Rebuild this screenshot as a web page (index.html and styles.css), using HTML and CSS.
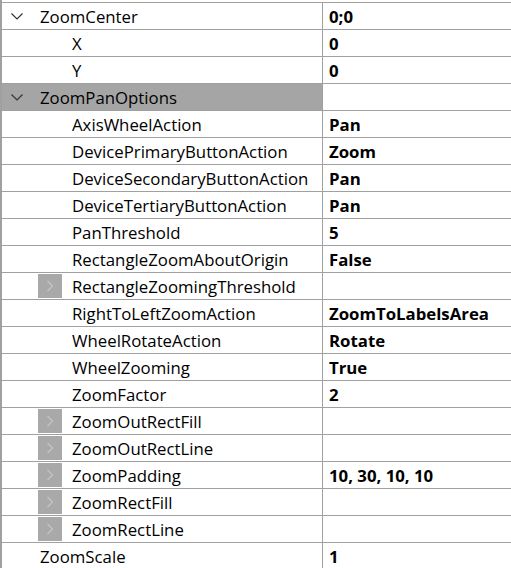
FILE: index.html
```html
<!DOCTYPE html>
<html>
<head>
<meta charset="utf-8">
<link rel="stylesheet" href="styles.css">
</head>
<body>
<div class="grid">
  <div class="row"><div class="name lvl0"><span class="chev"><svg width="12" height="7" viewBox="0 0 12 7"><path d="M0.5 0.5 L6 6 L11.5 0.5" fill="none" stroke="#333" stroke-width="1.2"/></svg></span>ZoomCenter</div><div class="val">0;0</div></div>
  <div class="row"><div class="name lvl1">X</div><div class="val">0</div></div>
  <div class="row"><div class="name lvl1">Y</div><div class="val">0</div></div>
  <div class="row sel"><div class="name lvl0"><span class="chev"><svg width="12" height="7" viewBox="0 0 12 7"><path d="M0.5 0.5 L6 6 L11.5 0.5" fill="none" stroke="#333" stroke-width="1.2"/></svg></span>ZoomPanOptions</div><div class="val"></div></div>
  <div class="row"><div class="name lvl1">AxisWheelAction</div><div class="val">Pan</div></div>
  <div class="row"><div class="name lvl1">DevicePrimaryButtonAction</div><div class="val">Zoom</div></div>
  <div class="row"><div class="name lvl1">DeviceSecondaryButtonAction</div><div class="val">Pan</div></div>
  <div class="row"><div class="name lvl1">DeviceTertiaryButtonAction</div><div class="val">Pan</div></div>
  <div class="row"><div class="name lvl1">PanThreshold</div><div class="val">5</div></div>
  <div class="row"><div class="name lvl1">RectangleZoomAboutOrigin</div><div class="val">False</div></div>
  <div class="row"><div class="name lvl1 exp"><span class="box"><svg width="8" height="12" viewBox="0 0 8 12"><path d="M1.5 1 L6.5 6 L1.5 11" fill="none" stroke="#c4c4c4" stroke-width="1.3"/></svg></span>RectangleZoomingThreshold</div><div class="val"></div></div>
  <div class="row"><div class="name lvl1">RightToLeftZoomAction</div><div class="val">ZoomToLabelsArea</div></div>
  <div class="row"><div class="name lvl1">WheelRotateAction</div><div class="val">Rotate</div></div>
  <div class="row"><div class="name lvl1">WheelZooming</div><div class="val">True</div></div>
  <div class="row"><div class="name lvl1">ZoomFactor</div><div class="val">2</div></div>
  <div class="row"><div class="name lvl1 exp"><span class="box"><svg width="8" height="12" viewBox="0 0 8 12"><path d="M1.5 1 L6.5 6 L1.5 11" fill="none" stroke="#c4c4c4" stroke-width="1.3"/></svg></span>ZoomOutRectFill</div><div class="val"></div></div>
  <div class="row"><div class="name lvl1 exp"><span class="box"><svg width="8" height="12" viewBox="0 0 8 12"><path d="M1.5 1 L6.5 6 L1.5 11" fill="none" stroke="#c4c4c4" stroke-width="1.3"/></svg></span>ZoomOutRectLine</div><div class="val"></div></div>
  <div class="row"><div class="name lvl1 exp"><span class="box"><svg width="8" height="12" viewBox="0 0 8 12"><path d="M1.5 1 L6.5 6 L1.5 11" fill="none" stroke="#c4c4c4" stroke-width="1.3"/></svg></span>ZoomPadding</div><div class="val">10, 30, 10, 10</div></div>
  <div class="row"><div class="name lvl1 exp"><span class="box"><svg width="8" height="12" viewBox="0 0 8 12"><path d="M1.5 1 L6.5 6 L1.5 11" fill="none" stroke="#c4c4c4" stroke-width="1.3"/></svg></span>ZoomRectFill</div><div class="val"></div></div>
  <div class="row"><div class="name lvl1 exp"><span class="box"><svg width="8" height="12" viewBox="0 0 8 12"><path d="M1.5 1 L6.5 6 L1.5 11" fill="none" stroke="#c4c4c4" stroke-width="1.3"/></svg></span>ZoomRectLine</div><div class="val"></div></div>
  <div class="row"><div class="name lvl0">ZoomScale</div><div class="val">1</div></div>
</div>
</body>
</html>
```
FILE: styles.css
```css
html, body {
  margin: 0;
  padding: 0;
  background: #fff;
  overflow: hidden;
}
body {
  font-family: "Open Sans", "Noto Sans", sans-serif;
  font-size: 16.8px;
  color: #000;
}
.grid {
  width: 509px;
  height: 568px;
  border-left: 2px solid #a0a0a0;
  padding-top: 2px;
  box-sizing: content-box;
}
.row {
  display: grid;
  grid-template-columns: 321px 1fr;
  height: 26px;
  border-top: 1px solid #a0a0a0;
}
.name {
  display: flex;
  align-items: center;
  border-right: 1px solid #a0a0a0;
  white-space: nowrap;
  overflow: hidden;
  padding-top: 1px;
}
.lvl0 { padding-left: 38px; position: relative; }
.lvl1 { padding-left: 70px; }
.lvl1.exp { padding-left: 36px; }
.chev {
  position: absolute;
  left: 9px;
  top: 10px;
  display: flex;
}
.box {
  width: 24px;
  height: 24px;
  background: #a9a9a9;
  display: flex;
  align-items: center;
  justify-content: center;
  margin-right: 10px;
  margin-top: -1px;
}
.val {
  display: flex;
  align-items: center;
  padding-left: 6px;
  padding-top: 1px;
  font-weight: bold;
}
.sel .name {
  background: #a5a5a5;
}
```
